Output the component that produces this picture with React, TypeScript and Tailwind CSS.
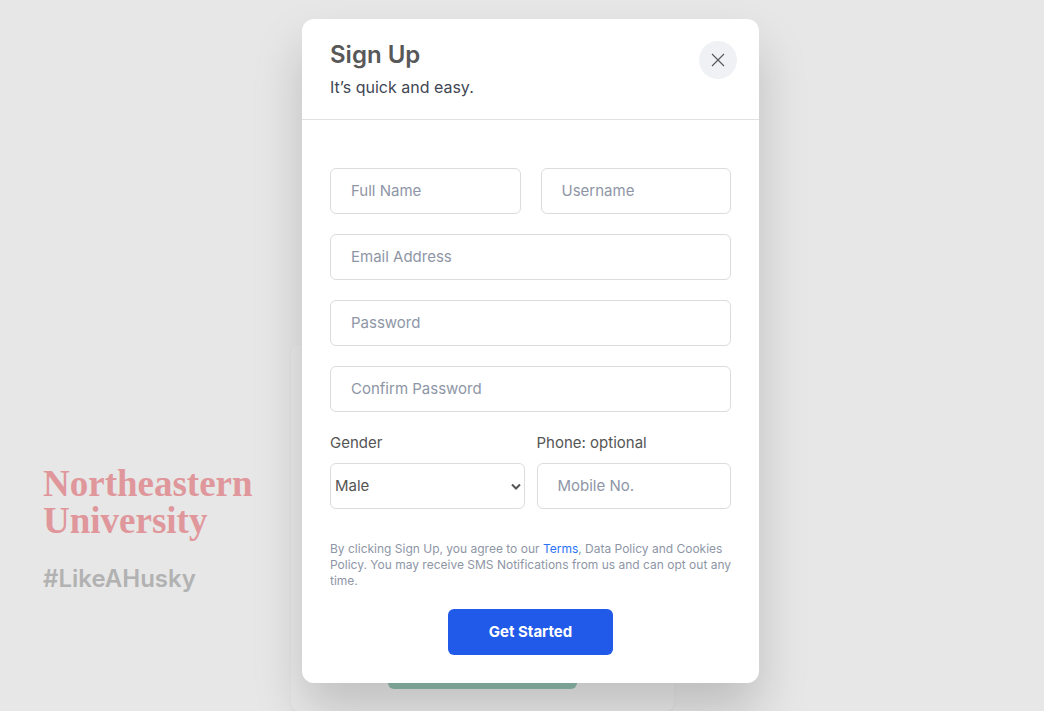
import type { InputHTMLAttributes } from 'react';

const fieldClass =
  'block h-[46px] w-full min-w-0 rounded-md border border-[#dcdcde] bg-white px-5 pb-0.5 text-[15px] text-[#555555] placeholder:text-[#8e96a6] placeholder:opacity-100';

function Field(props: InputHTMLAttributes<HTMLInputElement>) {
  return <input aria-label={props.id ? undefined : props.placeholder} className={fieldClass} {...props} />;
}

function Backdrop() {
  return (
    <div className="flex min-h-screen items-end">
      <div className="w-[291px] shrink-0 pb-[116px] pl-[43px]">
        <h1 className="font-['Liberation_Serif',serif] text-[37px] leading-[37px] font-bold text-[#e0979b]">
          Northeastern
          <br />
          University
        </h1>
        <p className="mt-6 text-2xl leading-8 font-semibold text-[#b2b2b2]">#LikeAHusky</p>
      </div>
      <div
        aria-hidden="true"
        className="flex h-[366px] w-[383px] shrink-0 flex-col items-center justify-end rounded-lg bg-[#eaeaea] pb-[22px] shadow-[0_1px_3px_rgba(0,0,0,0.04)]"
      >
        <div className="h-12 w-[189px] rounded-md bg-[#90bfae]" />
      </div>
    </div>
  );
}

function SignUpDialog() {
  return (
    <div
      role="dialog"
      aria-modal="true"
      aria-labelledby="signup-title"
      className="w-full max-w-[457px] rounded-xl bg-white shadow-[0_28px_50px_rgba(0,0,0,0.18)]"
    >
      <header className="flex items-start justify-between border-b border-[#e2e2e4] pt-5 pr-[22px] pb-[18px] pl-7">
        <div>
          <h2 id="signup-title" className="text-2xl leading-8 font-semibold text-[#585858]">
            Sign Up
          </h2>
          <p className="pt-0.5 text-base leading-7 text-[#3f4754]">It’s quick and easy.</p>
        </div>
        <button
          type="button"
          aria-label="Close"
          className="mt-0.5 flex size-[38px] items-center justify-center rounded-full bg-[#f0f1f5] text-[#555555]"
        >
          <svg width="14" height="14" viewBox="0 0 14 14" fill="none" stroke="currentColor" strokeWidth="1.1">
            <path d="M1 1l12 12M13 1L1 13" />
          </svg>
        </button>
      </header>

      <form className="px-7 pt-12 pb-7" onSubmit={(e) => e.preventDefault()}>
        <div className="flex flex-col gap-5">
          <div className="grid grid-cols-2 gap-5">
            <Field type="text" placeholder="Full Name" />
            <Field type="text" placeholder="Username" />
          </div>
          <Field type="email" placeholder="Email Address" />
          <Field type="password" placeholder="Password" />
          <Field type="password" placeholder="Confirm Password" />
          <div className="grid grid-cols-2 gap-3 text-[15px] text-[#555555]">
            <div>
              <label htmlFor="gender" className="mb-2.5 block leading-[21px]">
                Gender
              </label>
              <div className="relative">
                <select
                  id="gender"
                  className="block h-[46px] w-full appearance-none rounded-md border border-[#dcdcde] bg-white px-1 text-[15px] text-[#555555]"
                >
                  <option>Male</option>
                  <option>Female</option>
                </select>
                <svg
                  className="pointer-events-none absolute top-5 right-1"
                  width="10"
                  height="8"
                  viewBox="0 0 10 8"
                  fill="none"
                  stroke="#555555"
                  strokeWidth="2"
                >
                  <path d="M1 1.5l4 4 4-4" />
                </svg>
              </div>
            </div>
            <div>
              <label htmlFor="phone" className="mb-2.5 block leading-[21px]">
                Phone: optional
              </label>
              <Field id="phone" type="tel" placeholder="Mobile No." />
            </div>
          </div>
        </div>

        <p className="mt-8 -mr-2 text-xs leading-4 text-[#8e96a6]">
          By clicking Sign Up, you agree to our{' '}
          <a href="#terms" className="text-[#2872f5]">
            Terms
          </a>
          , Data Policy and Cookies Policy. You may receive SMS Notifications from us and can opt out any time.
        </p>
        <button
          type="submit"
          className="mx-auto mt-5 block h-[46px] w-[165px] rounded-md bg-[#2159e8] text-[15px] font-bold text-white"
        >
          Get Started
        </button>
      </form>
    </div>
  );
}

export default function App() {
  return (
    <div className="relative min-h-screen overflow-hidden bg-[#e7e7e7] font-['Inter',sans-serif]">
      <Backdrop />
      <div className="absolute inset-0 flex items-start justify-center pt-[19px] pl-[17px]">
        <SignUpDialog />
      </div>
    </div>
  );
}
